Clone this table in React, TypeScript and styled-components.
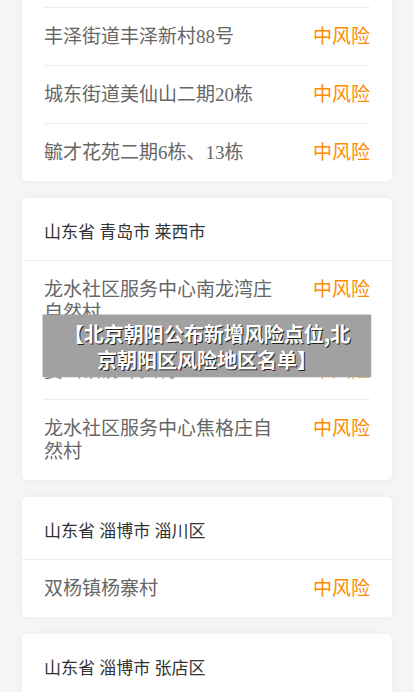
import React from "react";
import styled, { createGlobalStyle } from "styled-components";

const Global = createGlobalStyle`
  html, body { margin: 0; padding: 0; background: #f5f5f5; }
  body { font-family: "Liberation Serif", "Noto Sans CJK SC", serif; overflow: hidden; }
`;

const Page = styled.div`
  display: flex;
  flex-direction: column;
  gap: 17px;
  padding: 0 22px 40px;
  margin-top: -113px;
`;

const Card = styled.section`
  background: #fff;
  border-radius: 5px;
  box-shadow: 0 0 10px rgba(0, 0, 0, 0.04);
  overflow: hidden;
`;

const Header = styled.div`
  height: 63px;
  box-sizing: border-box;
  display: flex;
  align-items: center;
  padding: 3px 22px 0;
  font-size: 17px;
  color: #333;
  border-bottom: 1px solid #eee;
`;

const Rows = styled.div`
  padding: 0 22px;
`;

const Row = styled.div`
  display: flex;
  align-items: flex-start;
  justify-content: space-between;
  gap: 30px;
  padding: 17px 0;
  font-size: 19px;
  line-height: 23px;
  border-top: 1px solid #eee;
  &:first-child { border-top: none; }
`;

const Place = styled.div`
  flex: 1;
  color: #666;
`;

const Level = styled.div`
  flex: none;
  color: #ff8c00;
`;

const Banner = styled.div`
  position: fixed;
  left: 50%;
  top: 50%;
  transform: translate(-50%, -50%);
  width: 329px;
  height: 63px;
  box-sizing: border-box;
  padding: 6px 16px 0;
  background: #a1a1a1;
  color: #fff;
  font-weight: bold;
  font-size: 20px;
  line-height: 26px;
  text-align: center;
  font-family: "Noto Sans CJK SC", sans-serif;
  text-shadow: 1px 1px 0 #222;
`;

type Group = { area: string; items: string[] };

const groups: Group[] = [
  {
    area: "福建省 泉州市 丰泽区",
    items: ["东海街道东星社区", "丰泽街道丰泽新村88号", "城东街道美仙山二期20栋", "毓才花苑二期6栋、13栋"],
  },
  {
    area: "山东省 青岛市 莱西市",
    items: ["龙水社区服务中心南龙湾庄自然村", "姜山镇前埠头村", "龙水社区服务中心焦格庄自然村"],
  },
  { area: "山东省 淄博市 淄川区", items: ["双杨镇杨寨村"] },
  { area: "山东省 淄博市 张店区", items: ["马尚街道办事处"] },
];

export default function App() {
  return (
    <>
      <Global />
      <Page>
        {groups.map((g) => (
          <Card key={g.area}>
            <Header>{g.area}</Header>
            <Rows>
              {g.items.map((it) => (
                <Row key={it}>
                  <Place>{it}</Place>
                  <Level>中风险</Level>
                </Row>
              ))}
            </Rows>
          </Card>
        ))}
      </Page>
      <Banner>【北京朝阳公布新增风险点位,北京朝阳区风险地区名单】</Banner>
    </>
  );
}
